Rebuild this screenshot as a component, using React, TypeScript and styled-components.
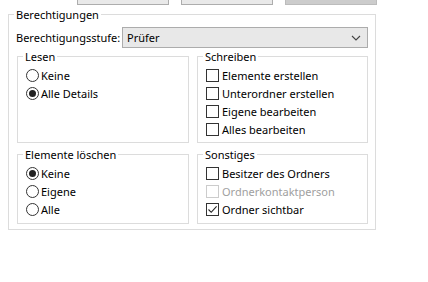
import React from "react";
import styled, { createGlobalStyle } from "styled-components";

const Global = createGlobalStyle`
  html, body { margin: 0; padding: 0; background: #ffffff; }
  body { font-family: "Noto Sans", "Open Sans", sans-serif; font-size: 11px; color: #000; }
  * { box-sizing: border-box; }
`;

const Page = styled.div`
  width: 428px;
  height: 282px;
  overflow: hidden;
  display: flex;
  flex-direction: column;
`;

const ButtonStrip = styled.div`
  height: 5px;
  overflow: hidden;
  display: flex;
  align-items: flex-end;
  gap: 12px;
  padding-left: 77px;
`;

const TopButton = styled.div<{ $pressed?: boolean }>`
  width: 92px;
  height: 23px;
  flex: none;
  border: 1px solid ${(p) => (p.$pressed ? "#bcbcbc" : "#adadad")};
  background: ${(p) => (p.$pressed ? "#cccccc" : "#e9e9e9")};
`;

const OuterSet = styled.fieldset`
  margin: 2px 0 0 8px;
  width: 368px;
  border: 1px solid #dcdcdc;
  padding: 5px 7px 5px 8px;
  min-width: 0;
`;

const Legend = styled.legend<{ $offset?: number }>`
  padding: 0 2px;
  margin-left: ${(p) => p.$offset ?? 0}px;
  line-height: 15px;
  font-size: 11px;
`;

const LevelRow = styled.div`
  display: flex;
  align-items: center;
  justify-content: space-between;
  height: 21px;
  margin-left: -1px;
`;

const Combo = styled.div`
  width: 246px;
  height: 21px;
  border: 1px solid #acacac;
  background: #e8e8e8;
  display: flex;
  align-items: center;
  justify-content: space-between;
  padding: 0 6px 0 4px;
`;

const Grid = styled.div`
  display: grid;
  grid-template-columns: 172px 171px;
  column-gap: 8px;
  row-gap: 4px;
  margin-top: 1px;
`;

const Group = styled.fieldset<{ $h: number }>`
  margin: 0;
  border: 1px solid #dcdcdc;
  padding: 2px 6px 0 8px;
  height: ${(p) => p.$h}px;
  min-width: 0;
  display: flex;
  flex-direction: column;
`;

const Option = styled.label<{ $disabled?: boolean; $box?: boolean }>`
  display: flex;
  align-items: center;
  height: 18px;
  gap: ${(p) => (p.$box ? 3 : 2)}px;
  color: ${(p) => (p.$disabled ? "#a0a0a0" : "#000")};
`;

const Radio = ({ checked }: { checked?: boolean }) => (
  <svg width="13" height="13" viewBox="0 0 13 13">
    <circle cx="6.5" cy="6.5" r="6" fill="#fff" stroke="#333" strokeWidth="1" />
    {checked && <circle cx="6.5" cy="6.5" r="3.5" fill="#222" />}
  </svg>
);

const Check = ({ checked, disabled }: { checked?: boolean; disabled?: boolean }) => (
  <svg width="13" height="13" viewBox="0 0 13 13">
    <rect x="0.5" y="0.5" width="12" height="12" fill="#fff" stroke={disabled ? "#cccccc" : "#333"} strokeWidth="1" />
    {checked && <path d="M2.5 6.5 L5.2 9.3 L10.6 3.3" fill="none" stroke="#222" strokeWidth="1.1" />}
  </svg>
);

const Chevron = () => (
  <svg width="10" height="6" viewBox="0 0 10 6">
    <path d="M1 1 L5 5 L9 1" fill="none" stroke="#444" strokeWidth="1.1" />
  </svg>
);

export default function App() {
  return (
    <Page>
      <Global />
      <ButtonStrip>
        <TopButton />
        <TopButton />
        <TopButton $pressed />
      </ButtonStrip>
      <OuterSet>
        <Legend $offset={-3}>Berechtigungen</Legend>
        <LevelRow>
          <span>Berechtigungsstufe:</span>
          <Combo>
            <span>Prüfer</span>
            <Chevron />
          </Combo>
        </LevelRow>
        <Grid>
          <Group $h={94}>
            <Legend $offset={-3}>Lesen</Legend>
            <Option><Radio />Keine</Option>
            <Option><Radio checked />Alle Details</Option>
          </Group>
          <Group $h={94}>
            <Legend $offset={-3}>Schreiben</Legend>
            <Option $box><Check />Elemente erstellen</Option>
            <Option $box><Check />Unterordner erstellen</Option>
            <Option $box><Check />Eigene bearbeiten</Option>
            <Option $box><Check />Alles bearbeiten</Option>
          </Group>
          <Group $h={77}>
            <Legend $offset={-3}>Elemente löschen</Legend>
            <Option><Radio checked />Keine</Option>
            <Option><Radio />Eigene</Option>
            <Option><Radio />Alle</Option>
          </Group>
          <Group $h={77}>
            <Legend $offset={-3}>Sonstiges</Legend>
            <Option $box><Check />Besitzer des Ordners</Option>
            <Option $box $disabled><Check disabled />Ordnerkontaktperson</Option>
            <Option $box><Check checked />Ordner sichtbar</Option>
          </Group>
        </Grid>
      </OuterSet>
    </Page>
  );
}
